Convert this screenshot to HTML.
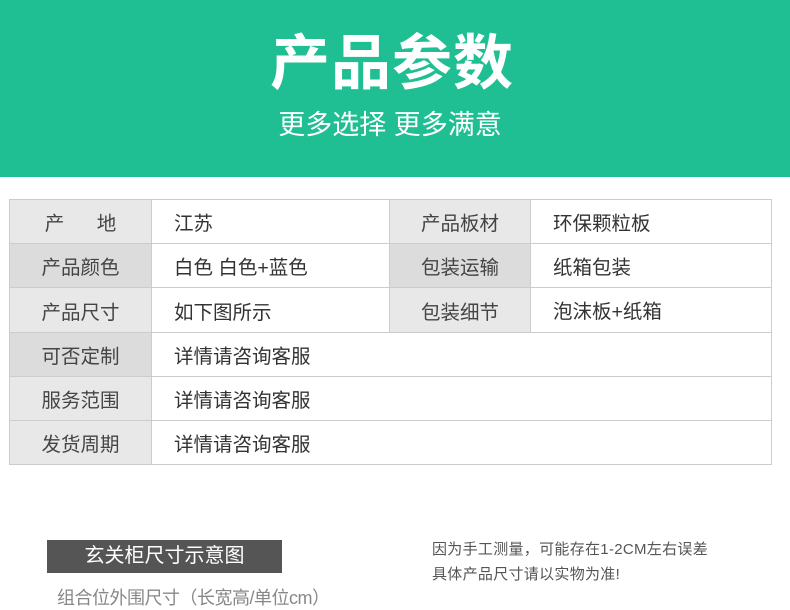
<!DOCTYPE html>
<html><head><meta charset="utf-8"><style>
*{margin:0;padding:0;box-sizing:border-box}
body{width:790px;height:607px;background:#fff;position:relative;overflow:hidden;font-family:"Liberation Sans","Noto Sans CJK SC",sans-serif}
.hd{position:absolute;left:0;top:0;width:790px;height:177px;background:#1fbf93}
.t1{position:absolute;left:0;width:784px;top:26px;text-align:center;color:#fff;font-size:60px;font-weight:bold;line-height:76px;letter-spacing:1px}
.t2{position:absolute;left:0;width:780px;top:106px;text-align:center;color:#fff;font-size:27px;line-height:38px}
.c{position:absolute;border-right:1px solid #ccc;border-bottom:1px solid #ccc;font-size:19.5px;color:#333;display:flex;align-items:center}
.l{background:#e8e8e8;justify-content:center;color:#444}
.l2{background:#dcdcdc}
.v{background:#fff;padding-left:22px}
</style></head><body>
<div class="hd"></div>
<div class="t1">产品参数</div>
<div class="t2">更多选择 更多满意</div>
<div style="position:absolute;left:9px;top:199px;width:763px;height:266px;border-left:1px solid #ccc;border-top:1px solid #ccc"></div>
<div class="c l" style="left:10px;top:200px;width:142px;height:44px">产&nbsp;&nbsp;&nbsp;&nbsp;&nbsp;&nbsp;地</div>
<div class="c v" style="left:152px;top:200px;width:238px;height:44px">江苏</div>
<div class="c l" style="left:390px;top:200px;width:141px;height:44px">产品板材</div>
<div class="c v" style="left:531px;top:200px;width:241px;height:44px">环保颗粒板</div>
<div class="c l l2" style="left:10px;top:244px;width:142px;height:44px">产品颜色</div>
<div class="c v" style="left:152px;top:244px;width:238px;height:44px">白色 白色+蓝色</div>
<div class="c l l2" style="left:390px;top:244px;width:141px;height:44px">包装运输</div>
<div class="c v" style="left:531px;top:244px;width:241px;height:44px">纸箱包装</div>
<div class="c l" style="left:10px;top:288px;width:142px;height:45px">产品尺寸</div>
<div class="c v" style="left:152px;top:288px;width:238px;height:45px;align-items:flex-start;padding-top:8px">如下图所示</div>
<div class="c l" style="left:390px;top:288px;width:141px;height:45px">包装细节</div>
<div class="c v" style="left:531px;top:288px;width:241px;height:45px;align-items:flex-start;padding-top:7px">泡沫板+纸箱</div>
<div class="c l l2" style="left:10px;top:333px;width:142px;height:44px">可否定制</div>
<div class="c v" style="left:152px;top:333px;width:620px;height:44px">详情请咨询客服</div>
<div class="c l" style="left:10px;top:377px;width:142px;height:44px">服务范围</div>
<div class="c v" style="left:152px;top:377px;width:620px;height:44px">详情请咨询客服</div>
<div class="c l" style="left:10px;top:421px;width:142px;height:44px">发货周期</div>
<div class="c v" style="left:152px;top:421px;width:620px;height:44px">详情请咨询客服</div>
<div style="position:absolute;left:47px;top:540px;width:235px;height:33px;background:#555;color:#fff;font-size:20px;line-height:33px;text-align:center">玄关柜尺寸示意图</div>
<div style="position:absolute;left:57px;top:586px;font-size:18px;color:#888;line-height:24px;letter-spacing:-0.5px">组合位外围尺寸（长宽高/单位cm）</div>
<div style="position:absolute;left:432px;top:537px;font-size:15px;color:#555;line-height:25px;letter-spacing:0.3px">因为手工测量，可能存在1-2CM左右误差<br>具体产品尺寸请以实物为准!</div>
</body></html>
